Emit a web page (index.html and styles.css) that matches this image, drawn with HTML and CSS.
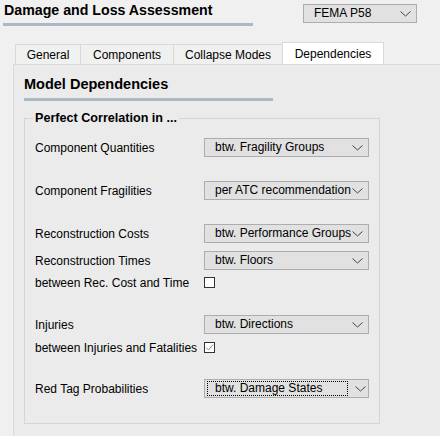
FILE: index.html
```html
<!DOCTYPE html>
<html>
<head>
<meta charset="utf-8">
<link rel="stylesheet" href="styles.css">
</head>
<body>
<div class="app">
  <div class="header">
    <div class="title-wrap">
      <div class="title">Damage and Loss Assessment</div>
      <div class="title-bar"></div>
    </div>
    <div class="combo combo-method">
      <span class="combo-text">FEMA P58</span>
      <svg class="chev" width="11" height="6" viewBox="0 0 11 6"><polyline points="0.5,0.5 5.5,5 10.5,0.5" fill="none" stroke="#444" stroke-width="1"/></svg>
    </div>
  </div>

  <div class="tabs">
    <div class="tab tab-general">General</div>
    <div class="tab tab-components">Components</div>
    <div class="tab tab-collapse">Collapse Modes</div>
    <div class="tab tab-dep active">Dependencies</div>
  </div>

  <div class="pane">
    <div class="section-title">Model Dependencies</div>
    <div class="section-bar"></div>

    <div class="group">
      <div class="group-title">Perfect Correlation in ...</div>
      <div class="rows">
        <div class="row r1">
          <span class="label">Component Quantities</span>
          <div class="combo"><span class="combo-text">btw. Fragility Groups</span><svg class="chev" width="11" height="6" viewBox="0 0 11 6"><polyline points="0.5,0.5 5.5,5 10.5,0.5" fill="none" stroke="#444" stroke-width="1"/></svg></div>
        </div>
        <div class="row r2">
          <span class="label">Component Fragilities</span>
          <div class="combo"><span class="combo-text">per ATC recommendation</span><svg class="chev" width="11" height="6" viewBox="0 0 11 6"><polyline points="0.5,0.5 5.5,5 10.5,0.5" fill="none" stroke="#444" stroke-width="1"/></svg></div>
        </div>
        <div class="row r3">
          <span class="label">Reconstruction Costs</span>
          <div class="combo"><span class="combo-text">btw. Performance Groups</span><svg class="chev" width="11" height="6" viewBox="0 0 11 6"><polyline points="0.5,0.5 5.5,5 10.5,0.5" fill="none" stroke="#444" stroke-width="1"/></svg></div>
        </div>
        <div class="row r4">
          <span class="label">Reconstruction Times</span>
          <div class="combo"><span class="combo-text">btw. Floors</span><svg class="chev" width="11" height="6" viewBox="0 0 11 6"><polyline points="0.5,0.5 5.5,5 10.5,0.5" fill="none" stroke="#444" stroke-width="1"/></svg></div>
        </div>
        <div class="row r5">
          <span class="label">between Rec. Cost and Time</span>
          <span class="check"></span>
        </div>
        <div class="row r6">
          <span class="label">Injuries</span>
          <div class="combo"><span class="combo-text">btw. Directions</span><svg class="chev" width="11" height="6" viewBox="0 0 11 6"><polyline points="0.5,0.5 5.5,5 10.5,0.5" fill="none" stroke="#444" stroke-width="1"/></svg></div>
        </div>
        <div class="row r7">
          <span class="label">between Injuries and Fatalities</span>
          <span class="check checked"><svg width="9" height="9" viewBox="0 0 9 9"><polyline points="1,4.5 3.5,7 8,1.5" fill="none" stroke="#8a8a8a" stroke-width="1"/></svg></span>
        </div>
        <div class="row r8">
          <span class="label">Red Tag Probabilities</span>
          <div class="combo focused"><span class="combo-text focus-rect">btw. Damage States</span><svg class="chev" width="11" height="6" viewBox="0 0 11 6"><polyline points="0.5,0.5 5.5,5 10.5,0.5" fill="none" stroke="#444" stroke-width="1"/></svg></div>
        </div>
      </div>
    </div>
  </div>
</div>
</body>
</html>
```

FILE: styles.css
```css
* { box-sizing: border-box; }
html, body { margin: 0; padding: 0; }
body {
  background: #f0f0f0;
  font-family: "Liberation Sans", Arial, sans-serif;
  font-size: 12px;
  color: #000;
  width: 440px;
  height: 436px;
  overflow: hidden;
}
.app { display: flex; flex-direction: column; }

.header {
  display: flex;
  align-items: flex-start;
  height: 42px;
}
.title-wrap { padding-left: 3px; width: 303px; }
.title {
  font-weight: bold;
  font-size: 14.2px;
  line-height: 18px;
  padding: 1px 0 0 1px;
  height: 23px;
}
.title-bar {
  width: 250px;
  height: 3px;
  background: #aab9c3;
}

.combo {
  width: 165px;
  height: 19px;
  border: 1px solid #adadad;
  background: #e1e1e1;
  display: flex;
  align-items: center;
  padding-left: 10px;
  padding-right: 5px;
}
.combo-text { flex: 1; white-space: nowrap; overflow: hidden; line-height: 15px; }
.chev { flex: none; }
.combo-method {
  width: 114px;
  margin-top: 4px;
}

.tabs {
  display: flex;
  padding-left: 15px;
  height: 22px;
  align-items: flex-end;
}
.tab {
  height: 20px;
  border: 1px solid #d9d9d9;
  border-bottom: none;
  background: #f0f0f0;
  display: flex;
  align-items: center;
  justify-content: center;
  margin-right: -1px;
  padding-top: 1px;
}
.tab-general { width: 66px; }
.tab-components { width: 94px; }
.tab-collapse { width: 110px; }
.tab-dep { width: 102px; }
.tab.active {
  height: 22px;
  background: #fff;
  position: relative;
  z-index: 1;
}

.pane {
  margin-left: 13px;
  background: #ebebeb;
  border-left: 1px solid #dadada;
  border-top: 1px solid #dadada;
  padding-left: 10px;
  height: 372px;
}
.section-title {
  font-weight: bold;
  font-size: 14.5px;
  line-height: 18px;
  margin-top: 10px;
  height: 23px;
}
.section-bar {
  width: 249px;
  height: 3px;
  background: #aab9c3;
}

.group {
  margin-top: 17px;
  width: 356px;
  height: 306px;
  border: 1px solid #d5d5d5;
  display: flex;
  flex-direction: column;
}
.group-title {
  align-self: flex-start;
  font-weight: bold;
  font-size: 12.6px;
  line-height: 15px;
  margin: -8px 0 0 8px;
  padding: 0 2px;
  background: #ebebeb;
}
.rows { display: flex; flex-direction: column; padding-left: 10px; }
.row {
  display: flex;
  align-items: center;
  height: 19px;
}
.label { width: 169px; flex: none; white-space: nowrap; }
.r1 { margin-top: 12px; }
.r2 { margin-top: 24px; }
.r3 { margin-top: 24px; }
.r4 { margin-top: 8px; }
.r5 { margin-top: 3px; }
.r6 { margin-top: 23px; }
.r7 { margin-top: 4px; }
.r8 { margin-top: 22px; }

.check {
  width: 11px;
  height: 11px;
  border: 1px solid #333;
  background: #fff;
  display: flex;
  align-items: center;
  justify-content: center;
}

.combo.focused { padding-left: 2px; }
.focus-rect {
  flex: none;
  width: 141px;
  height: 15px;
  outline: 1px dotted #000;
  outline-offset: -1px;
  padding-left: 8px;
  margin-right: 7px;
}
```
